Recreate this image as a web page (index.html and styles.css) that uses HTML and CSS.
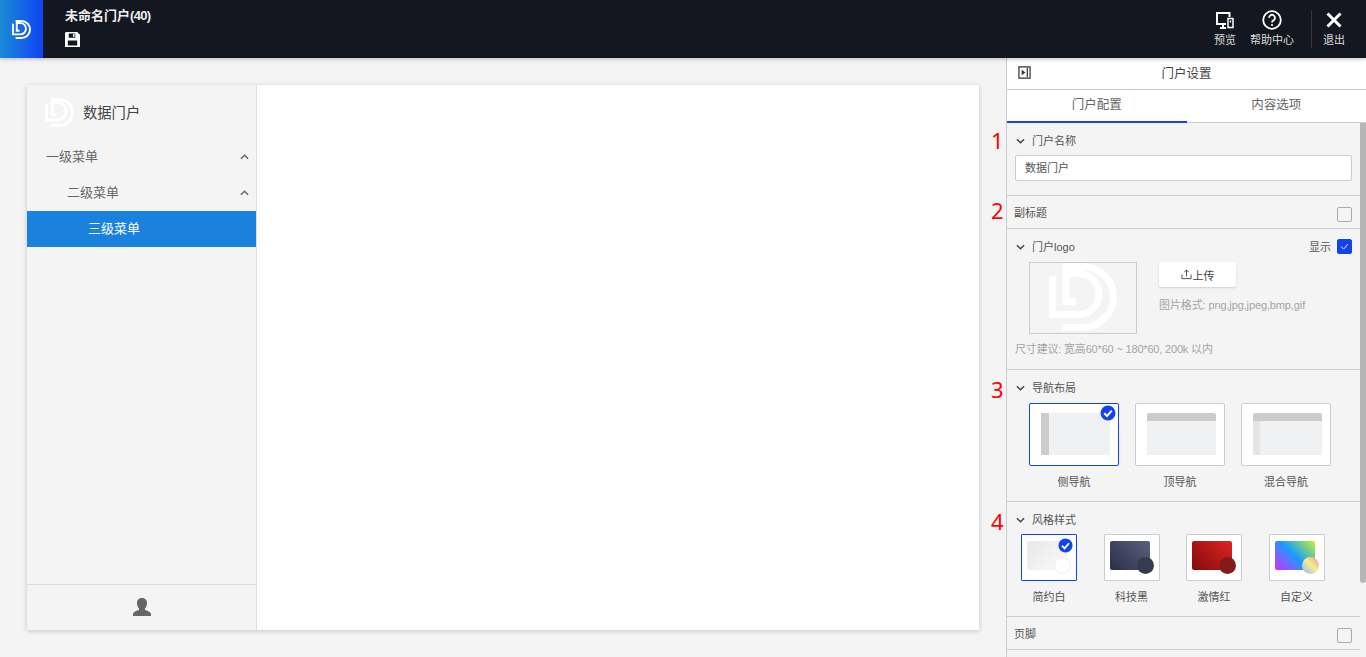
FILE: index.html
```html
<!DOCTYPE html>
<html>
	<head>
		<meta charset="utf-8">
		<title>门户设置</title>
		<link rel="stylesheet" href="styles.css">
	</head>
	<body>
		<svg class="defs" width="0" height="0">
			<symbol id="logo" viewBox="0 0 68 68">
				<path d="M13 3.500H34A30.500 30.500 0 0 1 34 64.500H13" fill="none" stroke="currentColor" stroke-width="7"/>
				<path d="M27 38.500H17V10.500H29.500A20.500 20.500 0 0 1 29.500 51.500H3.500V13" fill="none" stroke="currentColor" stroke-width="7"/>
			</symbol>
			<symbol id="down" viewBox="0 0 10 6">
				<path d="M1 1L5 5L9 1" fill="none" stroke="currentColor" stroke-width="1.600"/>
			</symbol>
			<symbol id="tick" viewBox="0 0 16 16">
				<circle cx="8" cy="8" r="7.500" fill="#1144ee"/>
				<path d="M4.200 8.200L7 11L11.800 5.600" fill="none" stroke="#fff" stroke-width="2"/>
			</symbol>
		</svg>

		<div class="topbar">
			<div class="brand">
				<svg class="brandLogo"><use href="#logo"/></svg>
			</div>
			<div class="title">
				<div class="titleName">未命名门户<span class="count">(40)</span></div>
				<svg class="saveIcon" viewBox="0 0 16 16">
					<path d="M1 0H13L16 3V16H0V1Z" fill="#fff"/>
					<path d="M4 1.500H11V6H4ZM3 9H13V14.500H3Z" fill="#14171f"/>
					<path d="M8.500 2.200H10.200V5.200H8.500Z" fill="#fff"/>
				</svg>
			</div>
			<div class="actions">
				<div class="action">
					<svg class="actionIcon" viewBox="0 0 20 20">
						<path d="M14.500 7V3H2V14H11M5 18H11M8 14V18" fill="none" stroke="#fff" stroke-width="2"/>
						<path d="M13 8.500H18V17.500H13Z" fill="none" stroke="#fff" stroke-width="1.500"/>
						<path d="M14.800 10.500H16.200V12.500H14.800Z" fill="#fff"/>
					</svg>
					<span>预览</span>
				</div>
				<div class="action">
					<svg class="actionIcon" viewBox="0 0 20 20">
						<circle cx="10" cy="10" r="8.800" fill="none" stroke="#fff" stroke-width="1.800"/>
						<path d="M7 7.800A3 3 0 1 1 11.500 10.400C10.500 11 10 11.500 10 12.600" fill="none" stroke="#fff" stroke-width="1.800"/>
						<circle cx="10" cy="15" r="1.100" fill="#fff"/>
					</svg>
					<span>帮助中心</span>
				</div>
				<div class="action exit">
					<svg class="actionIcon" viewBox="0 0 18 18">
						<path d="M2.500 2.500L15.500 15.500M15.500 2.500L2.500 15.500" fill="none" stroke="#fff" stroke-width="3"/>
					</svg>
					<span>退出</span>
				</div>
			</div>
		</div>

		<div class="workspace">
			<div class="stage">
				<div class="canvas">
					<div class="sidenav">
						<div class="navBrand">
							<svg class="navLogo"><use href="#logo"/></svg>
							<span>数据门户</span>
						</div>
						<ul class="menu">
							<li class="level1"><span>一级菜单</span><svg class="up"><use href="#down"/></svg></li>
							<li class="level2"><span>二级菜单</span><svg class="up"><use href="#down"/></svg></li>
							<li class="level3"><span>三级菜单</span></li>
						</ul>
						<div class="navUser">
							<svg class="userIcon" viewBox="0 0 18 18">
								<path d="M9 0C12 0 14 2 14 5C14 7.500 13 9.500 12 10.500V12C14 12.800 17 13 18 16V18H0V16C1 13 4 12.800 6 12V10.500C5 9.500 4 7.500 4 5C4 2 6 0 9 0Z" fill="#666"/>
							</svg>
						</div>
					</div>
					<div class="content"></div>
				</div>
			</div>

			<div class="panel">
				<div class="panelHead">
					<svg class="collapse" viewBox="0 0 14 14">
						<path d="M1 1H13V13H1Z" fill="none" stroke="#333" stroke-width="1.300"/>
						<path d="M10 2V12" stroke="#333" stroke-width="1.300"/>
						<path d="M4 4L8 7L4 10Z" fill="#333"/>
					</svg>
					<span>门户设置</span>
				</div>
				<div class="tabs">
					<div class="tab active">门户配置</div>
					<div class="tab">内容选项</div>
				</div>
				<div class="panelBody">
					<div class="scrollThumb"></div>

					<div class="section nameSection">
						<em class="mark">1</em>
						<div class="secTitle"><svg class="arrow"><use href="#down"/></svg>门户名称</div>
						<div class="textInput">数据门户</div>
					</div>

					<div class="section rowSection">
						<em class="mark">2</em>
						<span>副标题</span>
						<i class="checkbox"></i>
					</div>

					<div class="section logoSection">
						<div class="secTitle">
							<svg class="arrow"><use href="#down"/></svg>门户logo
							<div class="showBox">显示
								<i class="checkbox checked">
									<svg viewBox="0 0 10 8"><path d="M1 4L4 7L9 1" fill="none" stroke="#fff"/></svg>
								</i>
							</div>
						</div>
						<div class="logoRow">
							<div class="logoPreview"><svg class="bigLogo"><use href="#logo"/></svg></div>
							<div class="logoSide">
								<div class="uploadBtn">
									<svg viewBox="0 0 12 12"><path d="M3.500 3.500L6 1L8.500 3.500M6 1V8M1 6V10.500H11V6" fill="none" stroke="#444"/></svg>
									上传
								</div>
								<div class="hint">图片格式: png,jpg,jpeg,bmp,gif</div>
							</div>
						</div>
						<div class="hint sizeHint">尺寸建议: 宽高60*60 ~ 180*60, 200k 以内</div>
					</div>

					<div class="section layoutSection">
						<em class="mark">3</em>
						<div class="secTitle"><svg class="arrow"><use href="#down"/></svg>导航布局</div>
						<div class="layoutList">
							<div class="layoutItem">
								<div class="layoutCard selected">
									<div class="thumb side"></div>
									<svg class="tick"><use href="#tick"/></svg>
								</div>
								<span>侧导航</span>
							</div>
							<div class="layoutItem">
								<div class="layoutCard"><div class="thumb top"></div></div>
								<span>顶导航</span>
							</div>
							<div class="layoutItem">
								<div class="layoutCard"><div class="thumb mix"></div></div>
								<span>混合导航</span>
							</div>
						</div>
					</div>

					<div class="section styleSection">
						<em class="mark">4</em>
						<div class="secTitle"><svg class="arrow"><use href="#down"/></svg>风格样式</div>
						<div class="styleList">
							<div class="styleItem">
								<div class="styleCard selected">
									<div class="swatch white"><i></i></div>
									<svg class="tick"><use href="#tick"/></svg>
								</div>
								<span>简约白</span>
							</div>
							<div class="styleItem">
								<div class="styleCard"><div class="swatch black"><i></i></div></div>
								<span>科技黑</span>
							</div>
							<div class="styleItem">
								<div class="styleCard"><div class="swatch red"><i></i></div></div>
								<span>激情红</span>
							</div>
							<div class="styleItem">
								<div class="styleCard"><div class="swatch custom"><i></i></div></div>
								<span>自定义</span>
							</div>
						</div>
					</div>

					<div class="section rowSection">
						<span>页脚</span>
						<i class="checkbox"></i>
					</div>
				</div>
			</div>
		</div>
	</body>
</html>
```

FILE: styles.css
```css
*{box-sizing: border-box;}
html,body{height: 100%;}
body{
	margin: 0;
	display: flex;
	flex-direction: column;
	overflow: hidden;
	background-color: #f4f4f4;
	font-family: "Liberation Sans","Noto Sans CJK SC",sans-serif;
	font-size: 11px;
	color: #555;
}
.defs{position: absolute;}

/* top bar */
.topbar{
	height: 58px;
	flex: none;
	display: flex;
	background-color: #14171f;
	color: #fff;
	box-shadow: 0 1px 4px rgba(0,0,0,.25);
	position: relative;
	z-index: 2;
}
.brand{
	width: 43px;
	display: flex;
	align-items: center;
	justify-content: center;
	background: linear-gradient(90deg,#1a8bd6,#0f44f5);
}
.brandLogo{width: 19px;height: 19px;color: #fff;}
.title{padding: 7px 0 0 22px;}
.titleName{
	font-size: 13px;
	line-height: 17px;
	font-weight: bold;
	color: #eee;
}
.count{letter-spacing: -.7px;}
.saveIcon{display: block;width: 15px;height: 15px;margin-top: 8px;}
.actions{margin-left: auto;display: flex;padding-top: 10px;}
.action{
	display: flex;
	flex-direction: column;
	align-items: center;
	margin-left: 14px;
	color: #ddd;
	height: 38px;
}
.actionIcon{width: 20px;height: 20px;margin-bottom: 3px;}
.action span{line-height: 15px;}
.exit{
	margin-left: 17px;
	padding: 0 21px 0 11px;
	border-left: 1px solid #333741;
}
.exit .actionIcon{width: 18px;height: 18px;margin: 1px 0 4px;}

.workspace{flex: 1;display: flex;min-height: 0;}

/* preview */
.stage{flex: 1;padding: 27px 27px 27px 27px;}
.canvas{
	height: 545px;
	display: flex;
	background-color: #fff;
	box-shadow: 0 1px 5px rgba(0,0,0,.2);
}
.sidenav{
	width: 230px;
	display: flex;
	flex-direction: column;
	background-color: #f4f4f4;
	border-right: 1px solid #ddd;
}
.navBrand{
	height: 54px;
	display: flex;
	align-items: center;
	padding-left: 18px;
	font-size: 14.300px;
	color: #444;
}
.navBrand span{margin-bottom: 2px;}
.navLogo{width: 29px;height: 29px;color: #fff;margin-right: 9px;}
.menu{list-style: none;margin: 0;padding: 0;flex: 1;font-size: 13px;color: #666;}
.menu li{height: 36px;display: flex;align-items: center;justify-content: space-between;padding-right: 7px;}
.menu li span{margin-bottom: 4px;}
.level1{padding-left: 19px;}
.level2{padding-left: 40px;}
.menu .level3{padding-left: 61px;background-color: #1a82de;color: #fff;}
.up{width: 9px;height: 6px;transform: rotate(180deg);color: #666;}
.navUser{
	height: 46px;
	flex: none;
	display: flex;
	align-items: center;
	justify-content: center;
	padding-bottom: 2px;
	border-top: 1px solid #ddd;
}
.userIcon{width: 18px;height: 18px;}
.content{flex: 1;}

/* settings panel */
.panel{
	width: 360px;
	flex: none;
	display: flex;
	flex-direction: column;
	min-height: 0;
	border-left: 1px solid #ccc;
}
.panelHead{
	height: 32px;
	flex: none;
	display: flex;
	align-items: center;
	justify-content: center;
	background-color: #fff;
	border-bottom: 1px solid #ccc;
	font-size: 12.500px;
	color: #444;
	position: relative;
}
.panelHead span{margin-bottom: 2px;}
.collapse{position: absolute;left: 11px;top: 8px;width: 13px;height: 13px;}
.tabs{height: 33px;flex: none;display: flex;background-color: #fff;border-bottom: 1px solid #ccc;}
.tab{
	width: 180px;
	height: 33px;
	line-height: 30px;
	text-align: center;
	font-size: 12.500px;
	color: #666;
}
.tab.active{border-bottom: 2px solid #1144ee;}
.panelBody{flex: 1;position: relative;min-height: 0;padding-right: 6px;}
.scrollThumb{
	position: absolute;
	top: 0;
	right: 0;
	width: 6px;
	height: 460px;
	background-color: #b5b5b5;
	border-radius: 0 0 3px 3px;
}
.section{border-bottom: 1px solid #ccc;position: relative;}
.mark{
	position: absolute;
	left: -16px;
	top: 5px;
	font-family: "Noto Sans",sans-serif;
	font-style: normal;
	font-size: 22px;
	line-height: 24px;
	color: #f00;
}
.secTitle{
	display: flex;
	align-items: center;
	height: 16px;
	padding-left: 9px;
	margin-top: -1px;
}
.arrow{width: 9px;height: 6px;margin: 1px 7px 0 0;color: #444;}
.nameSection{height: 73px;padding-top: 10px;}
.textInput{
	height: 26px;
	margin: 7px 8px 0;
	padding-left: 9px;
	line-height: 24px;
	background-color: #fff;
	border: 1px solid #ccc;
	border-radius: 2px;
	color: #555;
}
.rowSection{
	height: 33px;
	display: flex;
	align-items: center;
	justify-content: space-between;
	padding: 0 8px 0 7px;
}
.rowSection span{margin-bottom: 1px;}
.rowSection .checkbox{margin-top: 5px;}
.rowSection .mark{top: 2px;}
.checkbox{
	width: 15px;
	height: 15px;
	display: block;
	border: 1px solid #aaa;
	border-radius: 2px;
	background-color: #f4f4f4;
}
.checked{
	display: flex;
	align-items: center;
	justify-content: center;
	background-color: #1144ee;
	border-color: #1144ee;
}
.checked svg{width: 9px;height: 7px;}
.logoSection{height: 141px;padding-top: 10px;}
.showBox{margin-left: auto;margin-right: 8px;display: flex;align-items: center;gap: 6px;}
.logoRow{display: flex;padding-left: 22px;margin-top: 8px;}
.logoPreview{
	width: 108px;
	height: 72px;
	border: 1px solid #ccc;
	display: flex;
	align-items: center;
	justify-content: center;
}
.bigLogo{width: 68px;height: 68px;color: #fff;margin-bottom: 2px;}
.logoSide{margin-left: 22px;}
.uploadBtn{
	width: 77px;
	height: 25px;
	display: flex;
	align-items: center;
	justify-content: center;
	gap: 1px;
	background-color: #fff;
	border-radius: 2px;
	box-shadow: 0 1px 2px rgba(0,0,0,.15);
	color: #444;
	font-size: 11px;
}
.uploadBtn svg{width: 11px;height: 11px;}
.hint{color: #a4a4a4;letter-spacing: -.12px;}
.logoSide .hint{margin-top: 10px;line-height: 16px;}
.sizeHint{padding-left: 8px;margin-top: 7px;line-height: 16px;letter-spacing: -.18px;}
.layoutSection{height: 132px;padding-top: 10px;}
.layoutSection .mark{top: 7px;}
.layoutList{display: flex;padding-left: 22px;gap: 16px;margin-top: 8px;}
.layoutItem,.styleItem{display: flex;flex-direction: column;align-items: center;}
.layoutItem span{margin-top: 8px;line-height: 16px;}
.layoutCard{
	width: 90px;
	height: 63px;
	padding: 9px 9px 10px 11px;
	background-color: #fff;
	border: 1px solid #ccc;
	border-radius: 2px;
	position: relative;
}
.thumb{height: 42px;width: 69px;background-color: #f0f1f3;border-radius: 2px 2px 0 0;}
.thumb.side{background: linear-gradient(90deg,#ccc 8px,#f0f1f3 8px);border-radius: 0;}
.thumb.top{background: linear-gradient(#ccc 8px,#f0f1f3 8px);}
.thumb.mix{background: linear-gradient(#ccc 8px,transparent 8px),linear-gradient(90deg,#e4e4e4 7px,#f0f1f3 7px);}
.tick{position: absolute;top: 1px;right: 2px;width: 16px;height: 16px;}
.styleSection{height: 115px;padding-top: 10px;}
.styleSection .mark{top: 7px;}
.styleList{display: flex;padding-left: 14px;margin-top: 7px;}
.styleItem{margin-right: 26.500px;}
.styleItem span{margin-top: 8px;line-height: 16px;}
.styleCard{
	width: 56px;
	height: 47px;
	padding: 6px 5px;
	background-color: #fff;
	border: 1px solid #ccc;
	border-radius: 1px;
	position: relative;
}
.selected{border-color: #1144ee;}
.styleCard .tick{top: 3px;right: 3px;width: 15px;height: 15px;}
.swatch{width: 40px;height: 29px;border-radius: 2px;position: relative;}
.swatch i{
	position: absolute;
	left: 27px;
	top: 16px;
	width: 17px;
	height: 17px;
	border-radius: 50%;
}
.white{background: linear-gradient(135deg,#e8e8e8,#fafafa);}
.white i{background-color: #fff;border: 1px solid #eee;}
.black{background: linear-gradient(45deg,#2a2f48,#5a6080);}
.black i{background-color: #363c4e;}
.red{background: linear-gradient(45deg,#820c0c,#e02424);}
.red i{background-color: #841a1c;}
.custom{background: linear-gradient(45deg,#d62cff,#1a9cff 50%,#c2f52a);}
.custom i{background: linear-gradient(45deg,#9ab8ff,#f2f08a 55%,#ff8a9a);}
```
